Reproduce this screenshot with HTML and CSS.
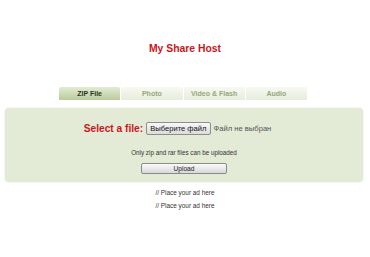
FILE: index.html
```html
<!DOCTYPE html>
<html lang="en">
<head>
    <meta charset="UTF-8">
    <title>My Share Host</title>
    <link rel="stylesheet" href="styles.css">
</head>
<body>
    <h1 class="title">My Share Host</h1>

    <ul class="tabs">
        <li class="active">ZIP File</li>
        <li>Photo</li>
        <li>Video &amp; Flash</li>
        <li>Audio</li>
    </ul>

    <div class="upload-box">
        <div class="file-row">
            <span class="file-label">Select a file:</span>
            <span class="file-btn">Выберите файл</span>
            <span class="file-name">Файл не выбран</span>
        </div>
        <p class="note">Only zip and rar files can be uploaded</p>
        <span class="upload-btn">Upload</span>
    </div>

    <p class="ad">// Place your ad here</p>
    <p class="ad">// Place your ad here</p>
</body>
</html>
```

FILE: styles.css
```css
* {
    margin: 0;
    padding: 0;
}
ul {
    list-style: none;
}
body {
    font-family: "Liberation Sans", Arial, sans-serif;
    background: #fff;
    color: #333;
}
.title {
    margin-top: 43px;
    font-size: 10.4px;
    line-height: 12px;
    text-align: center;
    color: #c8161d;
}
.tabs {
    display: flex;
    width: 249px;
    margin: 32px 0 0 59px;
}
.tabs li {
    width: 62px;
    height: 13px;
    margin-right: 1px;
    font-size: 7px;
    font-weight: bold;
    line-height: 13px;
    text-align: center;
    color: #95a77a;
    background: linear-gradient(#f7f9f2, #e7eddb);
    border-radius: 2px 2px 0 0;
}
.tabs li.active {
    color: #2a331c;
    background: linear-gradient(#e3ebd3, #b9cb9c);
}
.upload-box {
    height: 74px;
    margin: 8px 7px 0 5px;
    background: #e3ead5;
    border-radius: 4px;
    box-shadow: 0 0 2px rgba(0, 0, 0, 0.12);
    text-align: center;
}
.file-row {
    display: flex;
    align-items: center;
    justify-content: center;
    padding-top: 14px;
    margin-right: 13px;
}
.file-label {
    font-size: 10.2px;
    font-weight: bold;
    color: #c8161d;
    margin-right: 3px;
}
.file-btn {
    height: 11px;
    padding: 0 3px;
    font-size: 7.6px;
    line-height: 11px;
    color: #111;
    background: linear-gradient(#f8f8f8, #dcdcdc);
    border: 1px solid #8e8e8e;
    border-radius: 2px;
}
.file-name {
    margin-left: 3px;
    font-size: 7.6px;
    color: #555;
}
.note {
    margin-top: 14px;
    font-size: 6.3px;
    line-height: 8px;
    color: #333;
}
.upload-btn {
    display: inline-block;
    width: 84px;
    height: 9px;
    margin-top: 5px;
    font-size: 6.6px;
    line-height: 9px;
    color: #222;
    background: linear-gradient(#fafafa, #d8d8d8);
    border: 1px solid #8a8a8a;
    border-radius: 2px;
}
.ad {
    font-size: 6.4px;
    line-height: 13px;
    text-align: center;
    color: #333;
}
.upload-box + .ad {
    margin-top: 4px;
}
```
